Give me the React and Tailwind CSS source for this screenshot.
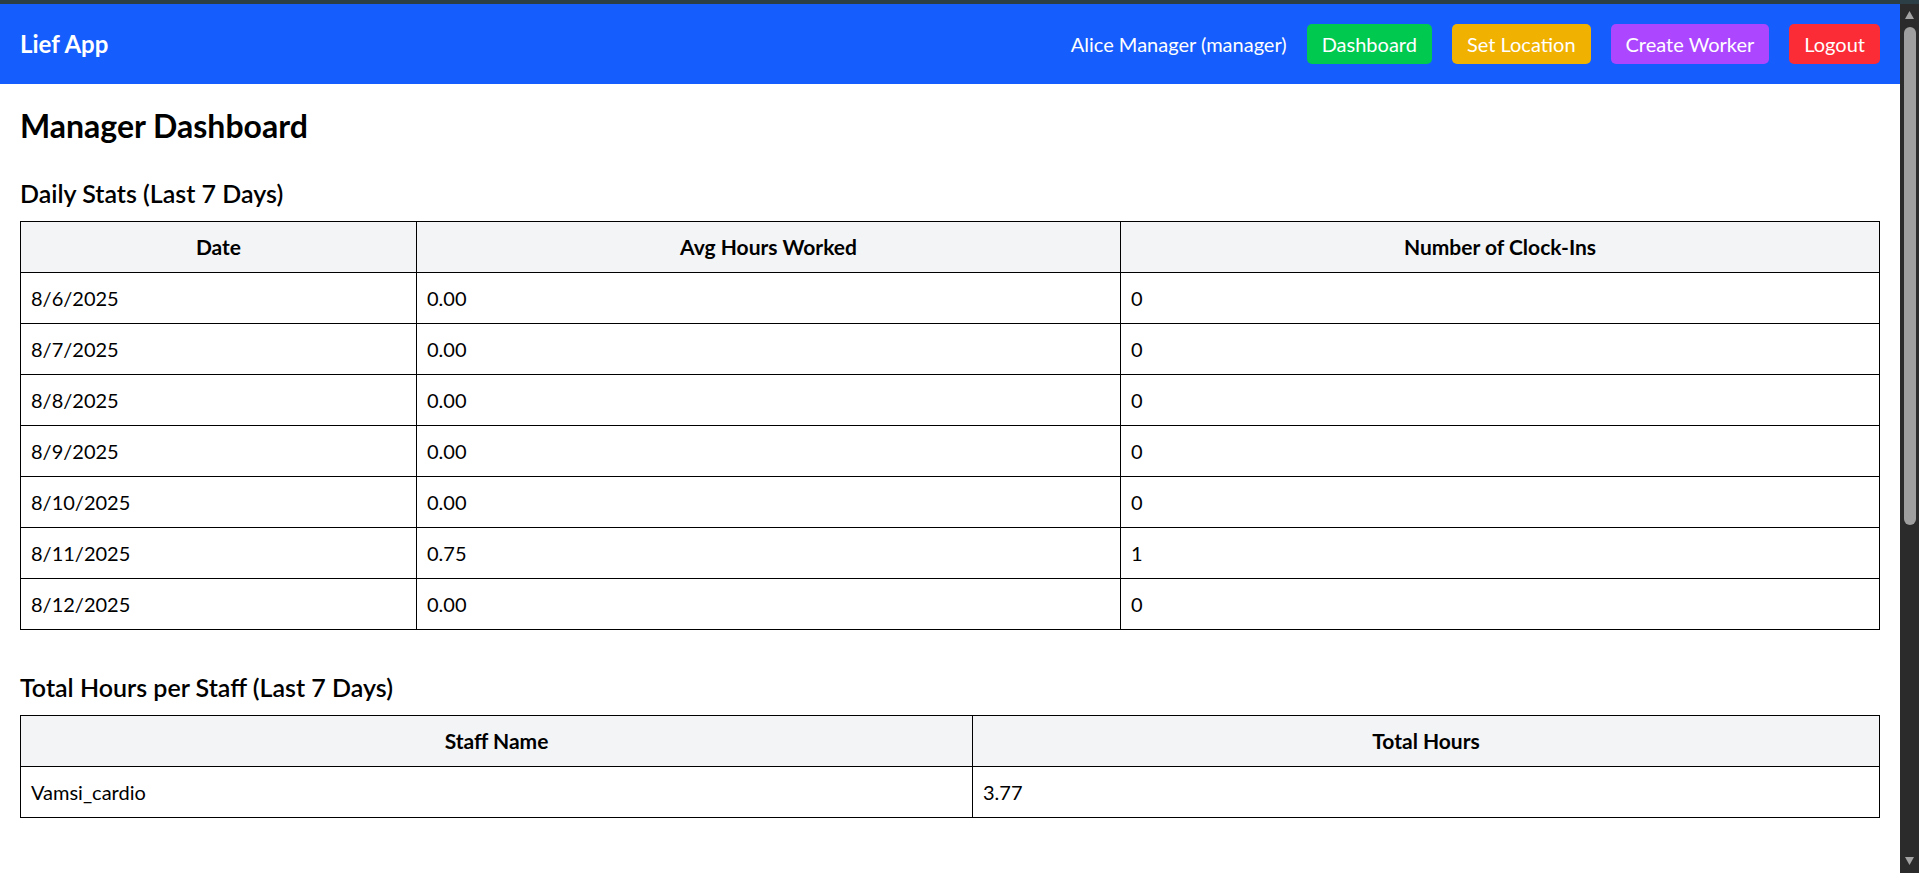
import React from "react";

const daily = [
  ["8/6/2025", "0.00", "0"],
  ["8/7/2025", "0.00", "0"],
  ["8/8/2025", "0.00", "0"],
  ["8/9/2025", "0.00", "0"],
  ["8/10/2025", "0.00", "0"],
  ["8/11/2025", "0.75", "1"],
  ["8/12/2025", "0.00", "0"],
];

const th = "border border-black bg-[#f3f4f6] px-[10px] py-[10px] text-center font-bold text-[21px]";
const td = "border border-black px-[10px] py-[10px] text-left";

export default function App() {
  return (
    <div
      className="h-[873px] w-[1919px] overflow-hidden flex flex-col bg-white text-black text-[20px] leading-[30px]"
      style={{ fontFamily: "Lato, 'Open Sans', sans-serif" }}
    >
      <div className="h-[4px] bg-[#2c3e46] shrink-0" />
      <div className="flex flex-1 min-h-0">
        <div className="flex-1 min-w-0">
          <nav className="bg-[#155dfc] p-[20px] flex items-center justify-between text-white">
            <div className="font-bold text-[24px] leading-[30px]">Lief App</div>
            <div className="flex items-center gap-[20px]">
              <span>Alice Manager (manager)</span>
              <button className="bg-[#00c950] px-[15px] py-[5px] rounded-[5px]">Dashboard</button>
              <button className="bg-[#f0b100] px-[15px] py-[5px] rounded-[5px]">Set Location</button>
              <button className="bg-[#ad46ff] px-[15px] py-[5px] rounded-[5px]">Create Worker</button>
              <button className="bg-[#fb2c36] px-[15px] py-[5px] rounded-[5px]">Logout</button>
            </div>
          </nav>
          <main className="p-[20px]">
            <h1 className="text-[32px] leading-[40px] font-bold mt-[2px] mb-[30px]">Manager Dashboard</h1>
            <section className="mb-[40px]">
              <h2 className="text-[25px] leading-[35px] font-semibold mb-[10px]">Daily Stats (Last 7 Days)</h2>
              <table className="w-full table-fixed border-collapse">
                <colgroup>
                  <col className="w-[396px]" />
                  <col className="w-[704px]" />
                  <col />
                </colgroup>
                <thead>
                  <tr>
                    <th className={th}>Date</th>
                    <th className={th}>Avg Hours Worked</th>
                    <th className={th}>Number of Clock-Ins</th>
                  </tr>
                </thead>
                <tbody>
                  {daily.map((r) => (
                    <tr key={r[0]}>
                      <td className={td}>{r[0]}</td>
                      <td className={td}>{r[1]}</td>
                      <td className={td}>{r[2]}</td>
                    </tr>
                  ))}
                </tbody>
              </table>
            </section>
            <section>
              <h2 className="text-[25px] leading-[35px] font-semibold mb-[10px]">Total Hours per Staff (Last 7 Days)</h2>
              <table className="w-full table-fixed border-collapse">
                <colgroup>
                  <col className="w-[952px]" />
                  <col />
                </colgroup>
                <thead>
                  <tr>
                    <th className={th}>Staff Name</th>
                    <th className={th}>Total Hours</th>
                  </tr>
                </thead>
                <tbody>
                  <tr>
                    <td className={td}>Vamsi_cardio</td>
                    <td className={td}>3.77</td>
                  </tr>
                </tbody>
              </table>
            </section>
          </main>
        </div>
        <div className="w-[19px] shrink-0 bg-[#2b2b2b] flex flex-col items-center">
          <svg width="19" height="19" viewBox="0 0 19 19" className="shrink-0">
            <polygon points="9.5,7 14,15 5,15" fill="#a3a3a3" />
          </svg>
          <div className="w-[12px] h-[498px] mt-[4px] rounded-[6px] bg-[#9f9f9f]" />
          <div className="flex-1" />
          <svg width="19" height="19" viewBox="0 0 19 19" className="shrink-0 mb-[2px]">
            <polygon points="5,5 14,5 9.5,13" fill="#a3a3a3" />
          </svg>
        </div>
      </div>
    </div>
  );
}
